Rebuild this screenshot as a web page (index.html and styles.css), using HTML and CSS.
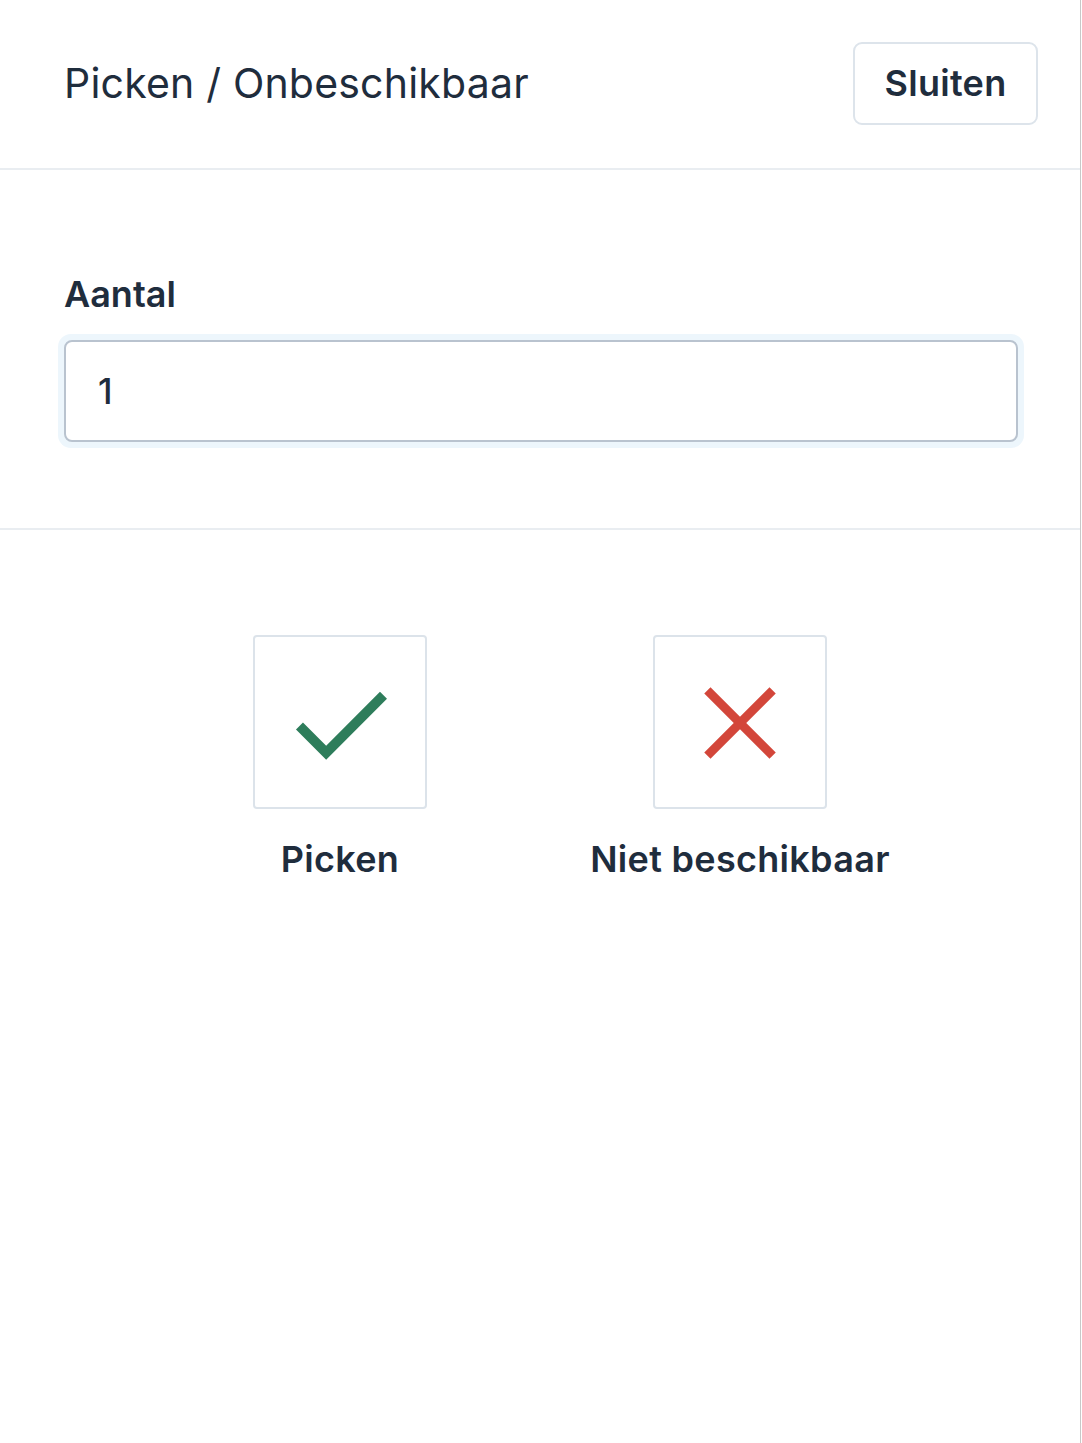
FILE: index.html
```html
<!DOCTYPE html>
<html lang="nl">
<head>
<meta charset="utf-8">
<title>Picken / Onbeschikbaar</title>
<link rel="stylesheet" href="styles.css">
</head>
<body>
<div class="panel">
  <header class="header">
    <h1 class="title">Picken / Onbeschikbaar</h1>
    <button class="close-btn" type="button">Sluiten</button>
  </header>
  <section class="form">
    <label class="label" for="qty">Aantal</label>
    <div class="input-ring">
      <input id="qty" class="input" type="text" value="1">
    </div>
  </section>
  <section class="actions">
    <div class="action">
      <button class="action-box" type="button" aria-label="Picken">
        <svg width="172" height="172" viewBox="0 0 172 172">
          <polyline points="45,90 72,117 130,59" fill="none" stroke="#2e7d5b" stroke-width="10" stroke-linecap="butt" stroke-linejoin="miter"/>
        </svg>
      </button>
      <span class="action-label">Picken</span>
    </div>
    <div class="action">
      <button class="action-box" type="button" aria-label="Niet beschikbaar">
        <svg width="172" height="172" viewBox="0 0 172 172">
          <line x1="53" y1="54" x2="119" y2="120" stroke="#d3463a" stroke-width="9"/>
          <line x1="119" y1="54" x2="53" y2="120" stroke="#d3463a" stroke-width="9"/>
        </svg>
      </button>
      <span class="action-label">Niet beschikbaar</span>
    </div>
  </section>
</div>
</body>
</html>
```

FILE: styles.css
```css
* { box-sizing: border-box; }
html, body { margin: 0; padding: 0; background: #ffffff; }
body {
  font-family: Inter, "Noto Sans", "Liberation Sans", sans-serif;
  color: #1f2d3d;
}
.panel {
  width: 1081px;
  min-height: 1443px;
  border-right: 1px solid #c8c8c8;
  background: #ffffff;
}
.header {
  height: 170px;
  display: flex;
  align-items: center;
  justify-content: space-between;
  padding: 0 42px 2px 64px;
  border-bottom: 2px solid #e9edf1;
}
.title {
  margin: 0;
  font-size: 41px;
  font-weight: 400;
  letter-spacing: 0.2px;
  color: #1f2d3d;
}
.close-btn {
  width: 185px;
  height: 83px;
  border: 2px solid #dde4eb;
  border-radius: 9px;
  background: #ffffff;
  font-family: inherit;
  font-size: 36px;
  font-weight: 600;
  letter-spacing: 0.3px;
  color: #1f2d3d;
  padding: 0;
}
.form {
  padding: 104px 62px 80px 64px;
  border-bottom: 2px solid #e9edf1;
}
.label {
  display: block;
  font-size: 36px;
  font-weight: 600;
  line-height: 40px;
  color: #1f2d3d;
  margin-bottom: 20px;
}
.input-ring {
  margin: 0 -6px;
  padding: 6px;
  border-radius: 13px;
  background: #edf6fc;
}
.input {
  display: block;
  width: 100%;
  height: 102px;
  border: 2px solid #b9c3cf;
  border-radius: 8px;
  padding: 0 32px;
  font-family: inherit;
  font-size: 35px;
  font-weight: 500;
  color: #1f2d3d;
  background: #ffffff;
  outline: none;
}
.actions {
  display: flex;
  justify-content: center;
  gap: 226px;
  padding: 105px 0 0 0;
}
.action {
  display: flex;
  flex-direction: column;
  align-items: center;
  gap: 30px;
  width: 174px;
}
.action-box {
  width: 174px;
  height: 174px;
  border: 2px solid #dce3ea;
  border-radius: 4px;
  background: #ffffff;
  padding: 0;
  display: flex;
  align-items: center;
  justify-content: center;
}
.action-box svg { display: block; }
.action-label {
  white-space: nowrap;
  font-size: 36px;
  font-weight: 600;
  line-height: 40px;
  letter-spacing: 0.3px;
  color: #1f2d3d;
}
```
